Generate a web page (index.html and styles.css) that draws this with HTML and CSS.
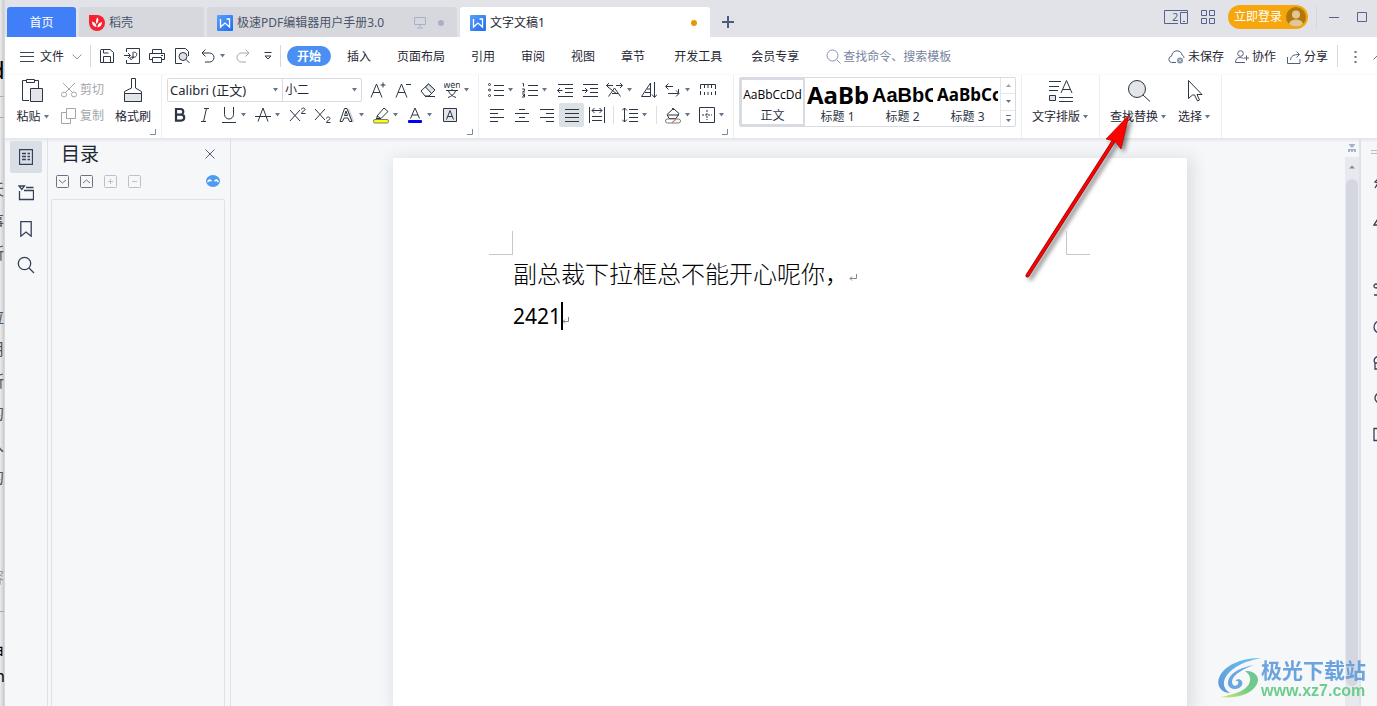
FILE: index.html
```html
<!DOCTYPE html>
<html lang="zh-CN">
<head>
<meta charset="utf-8">
<title>文字文稿1</title>
<link rel="stylesheet" href="styles.css">
</head>
<body>
<svg class="defs" aria-hidden="true">
  <defs>
    <linearGradient id="wg" x1="0" y1="0" x2="1" y2="1"><stop offset="0" stop-color="#5ba0fa"/><stop offset="1" stop-color="#1f6cf0"/></linearGradient>
    <symbol id="caret" viewBox="0 0 7 4"><path d="M1 0h5L3.500 3.500z" fill="#67748e"/></symbol>
    <symbol id="wps" viewBox="0 0 16 16"><rect width="16" height="16" rx="1" fill="url(#wg)"/><path d="M3.500 4v8L8 8l4.500 4V4h-3" fill="none" stroke="#fff" stroke-width="1.300"/></symbol>
    <symbol id="launch" viewBox="0 0 6 6"><path d="M5.500 0v5.500H0" fill="none" stroke="#7d8aa5"/></symbol>
  </defs>
</svg>

<div class="behind" aria-hidden="true">
  <b>d</b><i></i><i></i>
  <span class="first">天</span><span>事</span><span>所</span><span class="blank"></span><span>拉</span><span>用</span><span>所</span><span>的</span><span>入</span><span>的</span>
  <span class="dim">容</span><i class="low"></i><span class="dark">申</span><span class="dark tail">n</span>
</div>

<div class="app">
  <header class="titlebar">
    <nav class="tabs">
      <button class="tab home">首页</button>
      <button class="tab docer"><svg width="16" height="16" viewBox="0 0 16 16"><path d="M0 0h8a8 8 0 1 1-8 8z" fill="#f5222d"/><path d="M7.500 12C4 11.500 3 9 3 6.500 5.500 7 7.500 9 7.500 12zM7.500 9C6.500 6.500 7 4 8.500 2.500 10 4.500 9.500 7 7.500 9zM8.500 12.500c0-3 1.500-5 4.500-5.500 0 3-1.500 5-4.500 5.500z" fill="#fff"/></svg>稻壳</button>
      <button class="tab doc"><svg width="16" height="16"><use href="#wps"/></svg>极速PDF编辑器用户手册3.0<span class="tab-end"><svg width="12" height="12" viewBox="0 0 12 12" fill="none" stroke="#a7b0c8"><path d="M.5.5h11v7H.5zM6 7.500v3M3 11h6"/></svg><i class="dot"></i></span></button>
      <button class="tab doc current"><svg width="16" height="16"><use href="#wps"/></svg>文字文稿1<span class="tab-end"><i class="dot unsaved"></i></span></button>
      <button class="add" aria-label="新建"><svg width="12" height="12" viewBox="0 0 12 12"><path d="M6 0v12M0 6h12" stroke="#4b5b7c" stroke-width="2"/></svg></button>
    </nav>
    <div class="win">
      <button aria-label="窗口"><svg width="24" height="14" viewBox="0 0 24 14" fill="none" stroke="#53638a"><path d="M14 .5H.5v13H14M16.500 2.500h7v11h-7zM14 .5h9.500v2M19 11.500h2"/><text x="8" y="11" font-size="11" stroke="none" fill="#53638a">2</text></svg></button>
      <button class="grid4" aria-label="应用"><svg width="14" height="14" viewBox="0 0 14 14" fill="none" stroke="#53638a"><path d="M.5.5h5v5h-5zM8.500.5h5v5h-5zM.5 8.500h5v5h-5zM8.500 8.500h5v5h-5z"/></svg></button>
      <button class="login">立即登录<svg width="20" height="20" viewBox="0 0 20 20"><circle cx="10" cy="10" r="10" fill="#b1790b"/><circle cx="10" cy="7.500" r="4" fill="#e1c594"/><path d="M3 17c1-6 13-6 14 0a10 10 0 0 1-14 0z" fill="#e1c594"/></svg></button>
      <i class="vline"></i>
      <button class="min" aria-label="最小化"><svg width="10" height="10" viewBox="0 0 10 10"><path d="M0 5.500h10" stroke="#53638a"/></svg></button>
      <button aria-label="最大化"><svg width="10" height="10" viewBox="0 0 10 10"><path d="M.5.500h9v9h-9z" fill="none" stroke="#53638a"/></svg></button>
    </div>
  </header>

  <div class="menubar">
    <button class="file"><svg width="14" height="10" viewBox="0 0 14 10"><path d="M0 .5h14M0 4.500h14M0 9.500h14" stroke="#3d4657"/></svg>文件<svg width="10" height="6" viewBox="0 0 10 6"><path d="M.5.5L5 5 9.500.5" fill="none" stroke="#8d95a5"/></svg></button>
    <i class="vline"></i>
    <div class="quick">
      <button aria-label="保存"><svg width="16" height="16" viewBox="0 0 16 16" class="ln"><path d="M2 1.500h9l3.500 3v10h-13v-12zM4.500 14V8.500h7V14M4.500 1.500V5h5"/></svg></button>
      <button aria-label="输出为PDF"><svg width="16" height="16" viewBox="0 0 16 16" class="ln"><path d="M2.500 4V.5h13v15h-13V12M0 7.500h6M4 5l2.500 2.500L4 10M8.500 4.500c3-1 5 .5 4 3s-4 1.500-4 1.500M9 5v4c0 3-3 3-3 1.500s3-1.500 4-1"/></svg></button>
      <button aria-label="打印"><svg width="16" height="16" viewBox="0 0 16 16" class="ln"><path d="M3.500 5V1.500h9V5M3.500 11.500h-3v-6h15v6h-3M3.500 9.500h9v5h-9zM12 7.500h2"/></svg></button>
      <button aria-label="打印预览"><svg width="16" height="16" viewBox="0 0 16 16" class="ln"><path d="M8 15.500H1.500V.5h10l3 3V8"/><circle cx="9" cy="8.500" r="4" fill="#dfe3e8"/><path d="M12 11.500l3.500 3.500"/></svg></button>
      <button class="dd" aria-label="撤销"><svg width="14" height="14" viewBox="0 0 14 14" class="ln"><path d="M4.500.5L1 4l3.500 3.500M1 4h7.500a4.500 4.500 0 0 1 0 9H4"/></svg><svg width="7" height="4"><use href="#caret"/></svg></button>
      <button class="off" aria-label="恢复"><svg width="14" height="14" viewBox="0 0 14 14" class="ln"><path d="M9.500.5L13 4 9.500 7.500M13 4H5.500a4.500 4.500 0 0 0 0 9H10"/></svg></button>
      <button aria-label="更多"><svg width="8" height="8" viewBox="0 0 8 8" class="ln"><path d="M.5.500h7M1 4h6L4 7z"/></svg></button>
    </div>
    <i class="vline"></i>
    <nav class="menus">
      <button class="on">开始</button><button>插入</button><button>页面布局</button><button>引用</button><button>审阅</button><button>视图</button><button>章节</button><button class="wide">开发工具</button><button class="wide">会员专享</button>
    </nav>
    <label class="search"><svg width="15" height="15" viewBox="0 0 15 15" fill="none" stroke="#8793ab"><circle cx="6.500" cy="6.500" r="5.500"/><path d="M10.500 10.500l4 4"/></svg><input type="text" placeholder="查找命令、搜索模板" aria-label="查找命令"></label>
    <div class="share">
      <button><svg width="17" height="14" viewBox="0 0 17 14" fill="none" stroke="#53607c"><path d="M8 12.500H3.500a3.200 3.200 0 0 1 0-6.300C4 2.500 6.500.8 9 .8c3 0 4.500 2 5 4.200 1.300.5 2 1.500 2 3"/><circle cx="12" cy="10.500" r="3" fill="#8390aa" stroke="none"/><path d="M10.800 9.300l2.400 2.400m0-2.400l-2.400 2.400" stroke="#fff" stroke-width=".8"/></svg>未保存</button>
      <button><svg width="14" height="14" viewBox="0 0 14 14" fill="none" stroke="#53607c"><circle cx="5.500" cy="3.500" r="2.800"/><path d="M10 12.500H.5c0-6 6-5.500 8-4M11.500 5.500v5M9 8h5"/></svg>协作</button>
      <button><svg width="14" height="13" viewBox="0 0 14 13" fill="none" stroke="#53607c"><path d="M.5 6v6.500h12.500V8M3.500 9c.5-4 3-5.500 8.500-5.500M9.500.5l3 3-3 3"/></svg>分享</button>
      <i class="vline"></i>
      <button class="dots" aria-label="更多"><svg width="3" height="12" viewBox="0 0 3 12"><path d="M.5 0h2v2h-2zM.5 5h2v2h-2zM.5 10h2v2h-2z" fill="#6b7387"/></svg></button>
      <button class="fold" aria-label="折叠"><svg width="10" height="6" viewBox="0 0 10 6"><path d="M.5 5.500L5 1l4.500 4.500" fill="none" stroke="#6b7387"/></svg></button>
    </div>
  </div>

  <div class="ribbon">
    <section class="group clip">
      <button class="big"><span class="pic"><svg width="22" height="24" viewBox="0 0 22 24" class="ln"><path d="M7 21.500H.5v-20h4M12.500 1.500h4V9M4.500.5h8v3h-8z"/><path d="M8.500 9.500h12v13h-12z" fill="#e3e5e8"/></svg></span><span class="cap">粘贴<svg width="7" height="4"><use href="#caret"/></svg></span></button>
      <div class="pair off">
        <button><svg width="16" height="16" viewBox="0 0 16 16" class="ln"><circle cx="3" cy="12.500" r="2.500"/><circle cx="13" cy="12.500" r="2.500"/><path d="M2 1l9.500 9.500M14 1l-9.500 9.500"/></svg>剪切</button>
        <button><svg width="16" height="16" viewBox="0 0 16 16" class="ln"><path d="M5.500.5h9v10h-9zM5 4.500H.5v11h9V11"/></svg>复制</button>
      </div>
      <button class="big"><span class="pic"><svg width="20" height="26" viewBox="0 0 20 26" class="ln"><path d="M8.500.5h4V10l6 3.500v10h-17v-10l7-3.500z"/><path d="M1.500 15.500h17v8h-17z" fill="#e3e5e8"/></svg></span><span class="cap">格式刷</span></button>
      <svg class="launch" width="6" height="6"><use href="#launch"/></svg>
    </section>

    <section class="group">
      <div class="row">
        <div class="combos">
          <label class="combo font"><select aria-label="字体"><option>Calibri (正文)</option></select><svg width="7" height="4"><use href="#caret"/></svg></label>
          <label class="combo size"><select aria-label="字号"><option>小二</option></select><svg width="7" height="4"><use href="#caret"/></svg></label>
        </div>
        <button class="ib" aria-label="增大字号"><svg width="16" height="16" viewBox="0 0 16 16" class="ln"><path d="M1 15.500L6.500 2 12 15.500M3 10.500h7M10.500 3h5M13 .5v5"/></svg></button>
        <button class="ib" aria-label="减小字号"><svg width="16" height="16" viewBox="0 0 16 16" class="ln"><path d="M1 15.500L6.500 2 12 15.500M3 10.500h7M11 2.500h5"/></svg></button>
        <button class="ib" aria-label="清除格式"><svg width="16" height="16" viewBox="0 0 16 16" class="ln"><path d="M1 9l7.500-7 6.500 6-6 6H5z"/><path d="M5.500 5l6 6.500 3.500-3.500L8.500 2z" fill="#dfe2e6"/><path d="M5 14.500h10"/></svg></button>
        <button class="ib dd" aria-label="拼音"><svg width="16" height="16" viewBox="0 0 16 16" class="ln"><text x="8" y="6" font-size="9" text-anchor="middle" class="py">wén</text><path d="M2 8.500h12M8 7v2M4.500 9c1 3 4 5.500 7.500 6.500M11.500 9c-1 3-4 5.500-7.500 6.500"/></svg><svg width="7" height="4"><use href="#caret"/></svg></button>
      </div>
      <div class="row">
        <button class="ib" aria-label="加粗"><svg width="16" height="16" viewBox="0 0 16 16" class="ln"><path d="M4 2h4.500a2.800 2.800 0 0 1 0 5.600H4zM4 7.600h5.200a3 3 0 0 1 0 6H4z" stroke-width="2.200"/></svg></button>
        <button class="ib" aria-label="倾斜"><svg width="16" height="16" viewBox="0 0 16 16" class="ln"><path d="M7 1.500h5M4 14.500h5M9.500 1.500l-3 13"/></svg></button>
        <button class="ib dd" aria-label="下划线"><svg width="16" height="16" viewBox="0 0 16 16" class="ln"><path d="M3.500 0v7.500a4.500 4.500 0 0 0 9 0V0M1 15.500h14"/></svg><svg width="7" height="4"><use href="#caret"/></svg></button>
        <button class="ib dd" aria-label="删除线"><svg width="16" height="16" viewBox="0 0 16 16" class="ln"><path d="M3 14.500L8 1l5 13.500M0 9.500h16"/></svg><svg width="7" height="4"><use href="#caret"/></svg></button>
        <button class="ib" aria-label="上标"><svg width="17" height="16" viewBox="0 0 17 16" class="ln"><path d="M1 3l10 11M11 3L1 14M12.500 2.500c0-2 3.500-2 3.500 0 0 1.500-3.500 2-3.500 4H16.500"/></svg></button>
        <button class="ib" aria-label="下标"><svg width="17" height="16" viewBox="0 0 17 16" class="ln"><path d="M1 2l10 11M11 2L1 13M12.500 11.500c0-2 3.500-2 3.500 0 0 1.500-3.500 2-3.500 4H16.500"/></svg></button>
        <button class="ib dd" aria-label="文字效果"><svg width="16" height="16" viewBox="0 0 16 16" class="ln"><path d="M9 2l5 13" stroke="#d6d9de" stroke-width="3"/><path d="M1 14.500L5.500 1.500h2.500l5 13h-2.500L9 11H5l-1.500 3.500zM5.500 8.500h3L7 4z"/></svg><svg width="7" height="4"><use href="#caret"/></svg></button>
        <button class="ib dd" aria-label="突出显示"><svg width="16" height="17" viewBox="0 0 16 17" class="ln"><path d="M4 9L11 1l4 3.500-7 7H4zM4 9l4 2.500M3 11.500h5"/><rect x=".5" y="12.500" width="15" height="3.500" rx="1.500" fill="#ff0" stroke="#77787a"/></svg><svg width="7" height="4"><use href="#caret"/></svg></button>
        <button class="ib dd" aria-label="字体颜色"><svg width="16" height="17" viewBox="0 0 16 17" class="ln"><path d="M3.500 11.500L8 1l4.500 10.500M5 8h6"/><rect x="1" y="13" width="14" height="3" rx="1" fill="#00f" stroke="none"/></svg><svg width="7" height="4"><use href="#caret"/></svg></button>
        <button class="ib" aria-label="字符底纹"><svg width="14" height="14" viewBox="0 0 14 14" class="ln"><path d="M.5.500h13v13H.5z" fill="#e3e5e8"/><path d="M3.500 11.500L7 2.500l3.500 9M4.500 8.500h5"/></svg></button>
      </div>
      <svg class="launch" width="6" height="6"><use href="#launch"/></svg>
    </section>

    <section class="group">
      <div class="row">
        <button class="ib dd" aria-label="项目符号"><svg width="16" height="16" viewBox="0 0 16 16" class="ln"><path d="M6 3.500h10M6 8.500h10M6 13.500h10"/><circle cx="1.500" cy="2.500" r="1"/><circle cx="1.500" cy="8" r="1"/><circle cx="1.500" cy="13.500" r="1"/></svg><svg width="7" height="4"><use href="#caret"/></svg></button>
        <button class="ib dd" aria-label="编号"><svg width="16" height="16" viewBox="0 0 16 16" class="ln"><path d="M6 3.500h10M6 8.500h10M6 13.500h10M.5 1.500h1v3M0 7h2.500v1.500L.5 10H3M0 12h2.500v3H0M1 13.500h1"/></svg><svg width="7" height="4"><use href="#caret"/></svg></button>
        <button class="ib" aria-label="减少缩进"><svg width="16" height="16" viewBox="0 0 16 16" class="ln"><path d="M1 2.500h15M8 6.500h8M8 10.500h8M1 14.500h15M.5 8.500h5M3 6L.5 8.500 3 11"/></svg></button>
        <button class="ib" aria-label="增加缩进"><svg width="16" height="16" viewBox="0 0 16 16" class="ln"><path d="M1 2.500h15M8 6.500h8M8 10.500h8M1 14.500h15M0 8.500h5M3 6l2.500 2.500L3 11"/></svg></button>
        <button class="ib dd" aria-label="中文版式"><svg width="17" height="16" viewBox="0 0 17 16" class="ln"><path d="M2.500 14.500L8.500 6l6 8.500M2 5l9 7M6 11.500h6M16 3.500H10M7 3.500H.5M3 1L.5 3.500 3 6M14 1l2.500 2.500L14 6"/></svg><svg width="7" height="4"><use href="#caret"/></svg></button>
        <button class="ib" aria-label="排序"><svg width="16" height="16" viewBox="0 0 16 16" class="ln"><path d="M.5 14.500L9.500 1v13.500h-9M6 7h3.500M4 10.500h5.500M13.500 0v15M11 12.500l2.500 3 2.500-3"/></svg></button>
        <button class="ib dd" aria-label="换行"><svg width="16" height="16" viewBox="0 0 16 16" class="ln"><path d="M8 4.500H1M3.500 1.500L.5 4.500l3 3M3 11.500h10.500V7M11 8.500l3 3-3 3"/></svg><svg width="7" height="4"><use href="#caret"/></svg></button>
        <button class="ib" aria-label="标尺"><svg width="16" height="14" viewBox="0 0 16 14" class="ln"><path d="M.5 6V1.500h15V6M4.500 2v3M8 2v3M11.500 2v3M.5 8v4M4.500 9v3M8 9v3M11.500 9v3M15.500 8v4"/></svg></button>
      </div>
      <div class="row">
        <button class="ib" aria-label="左对齐"><svg width="14" height="14" viewBox="0 0 14 14" class="ln"><path d="M0 1.500h14M0 5.500h8M0 9.500h14M0 13.500h8"/></svg></button>
        <button class="ib" aria-label="居中"><svg width="14" height="14" viewBox="0 0 14 14" class="ln"><path d="M4 1.500h6M0 5.500h14M4 9.500h6M0 13.500h14"/></svg></button>
        <button class="ib" aria-label="右对齐"><svg width="14" height="14" viewBox="0 0 14 14" class="ln"><path d="M0 1.500h14M6 5.500h8M0 9.500h14M6 13.500h8"/></svg></button>
        <button class="ib sel" aria-label="两端对齐"><svg width="14" height="14" viewBox="0 0 14 14" class="ln"><path d="M0 1.500h14M0 5.500h14M0 9.500h14M0 13.500h14"/></svg></button>
        <button class="ib" aria-label="分散对齐"><svg width="16" height="16" viewBox="0 0 16 16" class="ln"><path d="M.5 0v16M15.500 0v16M3 3.500h10M5.500 1L3 3.500 5.500 6M10.500 1L13 3.500 10.500 6M3 9.500h10M3 13.500h10"/></svg></button>
        <i class="sep"></i>
        <button class="ib dd" aria-label="行距"><svg width="16" height="16" viewBox="0 0 16 16" class="ln"><path d="M2.500 1v14M0 3.500L2.500 1 5 3.500M0 12.500L2.500 15 5 12.500M7 2.500h9M7 6.500h9M7 10.500h9M7 14.500h9"/></svg><svg width="7" height="4"><use href="#caret"/></svg></button>
        <i class="sep"></i>
        <button class="ib dd" aria-label="底纹"><svg width="16" height="17" viewBox="0 0 16 17" class="ln"><path d="M2 7.500l6.500-6 5.500 5-3 5H4z" fill="#fff"/><path d="M7 1l2 2M3 8h11"/><rect x=".5" y="12" width="15" height="4" rx="2" fill="#fff" stroke="#77787a"/><path d="M7 15.500l4-3" stroke="#e34a4a"/></svg><svg width="7" height="4"><use href="#caret"/></svg></button>
        <button class="ib dd" aria-label="边框"><svg width="16" height="16" viewBox="0 0 16 16" class="ln"><path d="M.5.500h15v15H.5z"/><path d="M3 8h10M8 3v10" stroke-dasharray="2 1"/></svg><svg width="7" height="4"><use href="#caret"/></svg></button>
      </div>
      <svg class="launch" width="6" height="6"><use href="#launch"/></svg>
    </section>

    <section class="group gal">
      <div class="gallery">
        <button class="style picked"><span class="s0">AaBbCcDd</span>正文</button>
        <button class="style"><span class="s1">AaBb</span>标题 1</button>
        <button class="style"><span class="s2">AaBbC</span>标题 2</button>
        <button class="style"><span class="s3">AaBbCc</span>标题 3</button>
        <div class="scroller">
          <button aria-label="上"><svg width="5" height="3" viewBox="0 0 5 3"><path d="M0 3h5L2.500 0z" fill="#9aa3b5"/></svg></button>
          <button aria-label="下"><svg width="5" height="3" viewBox="0 0 5 3"><path d="M0 0h5L2.500 3z" fill="#67748e"/></svg></button>
          <button aria-label="展开"><svg width="5" height="7" viewBox="0 0 5 7"><path d="M0 0h5v1H0zM0 4h5L2.500 7z" fill="#67748e"/></svg></button>
        </div>
      </div>
    </section>

    <section class="group tools">
      <button class="big"><span class="pic"><svg width="24" height="22" viewBox="0 0 24 22" class="ln"><path d="M0 1.500h12M0 6.500h10M0 10.500h9M10 17.500h14M10 21.500h14M12 13L17.500.5 23 13M14 9.500h7"/><path d="M.5 15.500h6v5h-6z" fill="#e3e5e8"/></svg></span><span class="cap">文字排版<svg width="7" height="4"><use href="#caret"/></svg></span></button>
    </section>
    <section class="group tools">
      <button class="big"><span class="pic"><svg width="24" height="24" viewBox="0 0 24 24" class="ln"><circle cx="10" cy="10" r="8.500" fill="#e3e5e8"/><path d="M16 16l7 6.500"/></svg></span><span class="cap">查找替换<svg width="7" height="4"><use href="#caret"/></svg></span></button>
      <button class="big"><span class="pic"><svg width="16" height="24" viewBox="0 0 16 24" class="ln"><path d="M1.500 1.500v18L5.500 16h2l3 6 2-1-2.500-5.500h5z"/></svg></span><span class="cap">选择<svg width="7" height="4"><use href="#caret"/></svg></span></button>
    </section>
  </div>

  <main class="work">
    <nav class="rail">
      <button class="on" aria-label="目录"><svg width="14" height="16" viewBox="0 0 14 16" class="nv"><path d="M.5.500h13v15H.5zM3 4.500h4M8.500 4.500H11M3 7.500h4M8.500 7.500H11M3 10.500h4M8.500 10.500H11"/></svg></button>
      <button aria-label="导航"><svg width="16" height="16" viewBox="0 0 16 16" class="nv"><path d="M1 1h5.500L3.800 4.500zM8 2.500h7.500M1.500 6v8.500h14v-9H6"/></svg></button>
      <button aria-label="书签"><svg width="12" height="16" viewBox="0 0 12 16" class="nv"><path d="M.8.500h10.400v14.700L6 11 .8 15.200z"/></svg></button>
      <button aria-label="查找"><svg width="18" height="18" viewBox="0 0 18 18" class="nv"><circle cx="7.500" cy="7.500" r="6.200"/><path d="M12 12l5 5"/></svg></button>
    </nav>
    <aside class="panel">
      <div class="head"><h2>目录</h2><button aria-label="关闭"><svg width="10" height="10" viewBox="0 0 10 10"><path d="M.5.500l9 9M9.500.5l-9 9" stroke="#53607c"/></svg></button></div>
      <div class="acts">
        <button aria-label="展开"><svg width="13" height="13" viewBox="0 0 13 13" class="ac"><rect x=".5" y=".5" width="12" height="12" rx="1"/><path d="M3 5l3.500 3L10 5"/></svg></button>
        <button aria-label="收起"><svg width="13" height="13" viewBox="0 0 13 13" class="ac"><rect x=".5" y=".5" width="12" height="12" rx="1"/><path d="M3 8l3.500-3L10 8"/></svg></button>
        <button class="pale" aria-label="增加"><svg width="13" height="13" viewBox="0 0 13 13" class="ac"><rect x=".5" y=".5" width="12" height="12" rx="1"/><path d="M4 6.500h5M6.500 4v5"/></svg></button>
        <button class="pale" aria-label="减少"><svg width="13" height="13" viewBox="0 0 13 13" class="ac"><rect x=".5" y=".5" width="12" height="12" rx="1"/><path d="M4 6.500h5"/></svg></button>
        <button class="smart" aria-label="智能识别"><svg width="14" height="12" viewBox="0 0 14 12"><ellipse cx="7" cy="6" rx="7" ry="6" fill="#4f9bf0"/><path d="M1.500 7l2-2 2 1M8.500 6l2-1 2 2" fill="none" stroke="#fff" stroke-width="1.500"/></svg></button>
      </div>
      <div class="outline"></div>
    </aside>
    <div class="canvas">
      <article class="page">
        <div class="body">
          <i class="mark l"></i><i class="mark r"></i>
          <p>副总裁下拉框总不能开心呢你，<svg width="8" height="8" viewBox="0 0 8 8" class="ret"><path d="M7.500 0v4.500H1M3 2.500l-2 2 2 2"/></svg></p>
          <p class="num">2421<i class="cursor"></i><svg width="8" height="8" viewBox="0 0 8 8" class="ret"><path d="M5.500 0v4.500H0M2 2.500l-2 2 2 2"/></svg></p>
        </div>
      </article>
    </div>
    <div class="vscroll">
      <div class="split"><svg width="8" height="8" viewBox="0 0 8 8" fill="#a9b2c6"><path d="M1 0h6v1L4 4 1 1zM0 5h8v3H6V6.500H5V8H3V6.500H2V8H0z"/></svg></div>
      <div class="track"><svg width="6" height="4" viewBox="0 0 6 4"><path d="M0 3.500h6L3 .5z" fill="#7d8aa5"/></svg><div class="thumb"></div></div>
    </div>
    <aside class="edge">
      <svg width="12" height="6" viewBox="0 0 12 6" class="handle"><path d="M0 1.500h12M0 4.500h12"/></svg>
      <svg width="16" height="16" viewBox="0 0 16 16" class="nv"><path d="M6 3L2 7l3 1-3 5"/></svg>
      <svg width="16" height="16" viewBox="0 0 16 16" class="nv"><path d="M1 14h8l3-8H6z"/></svg>
      <svg width="16" height="16" viewBox="0 0 16 16" class="nv gap"><circle cx="3" cy="3" r="2"/><path d="M1 12h14M4 3h12"/></svg>
      <svg width="16" height="16" viewBox="0 0 16 16" class="nv"><circle cx="7" cy="8" r="6"/></svg>
      <svg width="16" height="16" viewBox="0 0 16 16" class="nv"><path d="M2 8C-1 3 6-1 9 3M2 8v6h12M2 8h10"/></svg>
      <svg width="16" height="16" viewBox="0 0 16 16" class="nv"><circle cx="7" cy="7" r="5"/></svg>
      <svg width="16" height="16" viewBox="0 0 16 16" class="nv"><path d="M1 1.500h13v12H1z"/></svg>
    </aside>
  </main>
</div>

<svg class="arrow" width="116" height="170" viewBox="0 0 116 170" aria-hidden="true"><path d="M5.500 165.500L93 29" stroke="#8a0d0d" stroke-width="4" stroke-linecap="round"/><path d="M5.500 165.500L93 29" stroke="#f00" stroke-width="2.600" stroke-linecap="round"/><path d="M107 5L99 39l-6-8-9-2z" fill="#f00" stroke="#a00" stroke-width=".7"/></svg>

<div class="brand">
  <svg width="44" height="42" viewBox="0 0 44 42" aria-hidden="true">
    <defs><linearGradient id="sw" x1="0" y1="1" x2="1" y2="0"><stop offset="0" stop-color="#4b8ddb"/><stop offset="1" stop-color="#5cc1ea"/></linearGradient><linearGradient id="sg" x1="0" y1="1" x2="1" y2="0"><stop offset="0" stop-color="#d5e36a"/><stop offset=".5" stop-color="#67c877"/><stop offset="1" stop-color="#5bc08f"/></linearGradient></defs>
    <path d="M44 1C28 1 8 6 2 21c-3 8 3 15 11 15-7-4-8-11-3-18C17 9 29 4 44 1z" fill="url(#sw)"/>
    <path d="M37 8C24 10 10 17 11 27c1 6 11 7 14 1 2-5-4-8-7-4 3-1 4 1 3 3-2 3-6 2-6-2C15 18 26 12 37 8z" fill="#5c9fe0"/>
    <path d="M28 14c8-1 16 5 12 13C35 37 20 42 3 40c13-2 25-6 29-13 3-6 0-10-4-13z" fill="url(#sg)"/>
  </svg>
  <div><strong>极光下载站</strong><span>www.xz7.com</span></div>
</div>
</body>
</html>
```

FILE: styles.css
```css
* { box-sizing: border-box; }
html, body { height: 100%; }
body {
  margin: 0;
  display: flex;
  position: relative;
  overflow: hidden;
  background: #f5f7f9;
  color: #1f2733;
  font: 12px/16px "Noto Sans", "Noto Sans CJK SC", sans-serif;
}
button, input, select {
  font: inherit;
  color: inherit;
  background: none;
  border: 0;
  padding: 0;
  margin: 0;
  white-space: nowrap;
}
button { display: inline-flex; align-items: center; justify-content: center; flex: none; }
svg { flex: none; display: block; }
.defs { position: absolute; width: 0; height: 0; }
.ln { fill: none; stroke: #2d3644; }
.nv { fill: none; stroke: #34405a; stroke-width: 1.3; }
.ac { fill: none; stroke: #6d7380; }
.vline { width: 1px; height: 22px; background: #d4d7dd; flex: none; }

/* sliver of the window underneath */
.behind {
  width: 4px;
  flex: none;
  overflow: hidden;
  display: flex;
  flex-direction: column;
  background: linear-gradient(90deg, #ececec, #c9cacd);
  font-size: 16px;
  color: #555;
}
.behind b { font: 24px/32px "Noto Sans", sans-serif; margin: 54px 0 10px -10px; color: #000; height: 32px; }
.behind i { height: 1px; background: #aaa; margin-bottom: 20px; }
.behind span { height: 32px; line-height: 32px; margin-left: -12px; width: 16px; }
.behind .first { margin-top: 35px; }
.behind .dim { color: #999; margin-top: 68px; }
.behind .low { margin: 18px 0 24px; }
.behind .dark { color: #000; height: 24px; }
.behind .tail { margin-left: -5px; }

.app { flex: 1; min-width: 0; display: flex; flex-direction: column; border-left: 1px solid #d5d7dc; }

/* title bar */
.titlebar { display: flex; justify-content: space-between; height: 37px; flex: none; background: #e1e3e8; padding: 0 10px 0 2px; }
.tabs { display: flex; align-items: flex-end; gap: 3px; }
.tab { height: 30px; border-radius: 3px 3px 0 0; background: #d6d8dd; color: #4b5468; padding: 2px 10px 0; gap: 4px; justify-content: flex-start; }
.home { width: 69px; background: #417ff9; color: #fff; justify-content: center; }
.docer { width: 125px; }
.doc { width: 250px; }
.current { background: #fff; color: #1f2733; }
.tab-end { margin-left: auto; display: flex; align-items: center; gap: 12px; padding-right: 3px; }
.dot { width: 6px; height: 6px; border-radius: 3px; background: #a7b0c8; }
.dot.unsaved { background: #e99700; }
.add { width: 30px; height: 30px; }
.win { display: flex; align-items: center; height: 33px; }
.grid4 { margin: 0 13px; }
.login { height: 24px; border-radius: 12px; background: #f5a70d; color: #fff; padding: 0 2px 0 6px; gap: 4px; }
.win .vline { margin: 0 12px 0 8px; }
.min { margin-right: 18px; }

/* menu bar */
.menubar { display: flex; align-items: center; height: 38px; flex: none; background: #fff; padding-left: 15px; }
.file { gap: 6px; margin-right: 8px; padding-top: 1px; }
.file svg:last-child { margin-left: 2px; }
.quick { display: flex; padding-left: 3px; }
.quick button { width: 25px; height: 24px; }
.quick .dd { width: 36px; gap: 4px; padding-left: 2px; }
.off { color: #a3a6ab; }
.off .ln { stroke: #a3a6ab; }
.menus { display: flex; gap: 6px; margin-left: 6px; }
.menus button { height: 20px; padding: 2px 10px 0; border-radius: 10px; }
.menus .on { background: #4a90f2; color: #fff; font-weight: 700; }
.menus .wide { margin-left: 3px; }
.search { display: flex; align-items: center; gap: 2px; margin-left: 17px; }
.search input { width: 130px; outline: 0; padding-top: 1px; }
.search input::placeholder { color: #7785a0; opacity: 1; }
.share { margin-left: auto; display: flex; align-items: center; gap: 11px; flex: none; overflow: hidden; }
.share button { gap: 3px; padding-top: 2px; }
.share .vline { margin-left: -2px; }
.share .dots { margin-left: 5px; }
.share .fold { width: 4px; margin-left: 5px; justify-content: flex-start; overflow: hidden; }

/* ribbon */
.ribbon { display: flex; height: 64px; flex: none; background: #fff; border-bottom: 1px solid #e4e6ea; box-shadow: 0 1px 3px #dfe2e6; z-index: 1; }
.group { position: relative; flex: none; padding: 3px 4px 0 5px; border-right: 1px solid #eceef0; display: flex; flex-direction: column; gap: 1px; }
.launch { position: absolute; right: 5px; bottom: 3px; }
.row { display: flex; height: 24px; align-items: center; }
.ib { width: 25px; height: 24px; }
.ib.dd { width: 34px; justify-content: flex-start; padding-left: 4px; gap: 3px; }
.ib.sel { background: #dce1e6; border-radius: 2px; }
.sep { width: 1px; height: 18px; background: #dcdfe4; margin: 0 4px; }
.py { stroke: none; fill: #2d3644; }
.clip { flex-direction: row; padding-left: 7px; padding-right: 8px; gap: 7px; }
.big { flex-direction: column; align-self: flex-start; min-width: 40px; }
.clip .big:first-child { min-width: 42px; }
.pic { height: 26px; display: flex; align-items: center; }
.cap { height: 26px; display: flex; align-items: center; gap: 2px; }
.pair { display: flex; flex-direction: column; gap: 2px; padding-right: 2px; }
.pair button { height: 24px; gap: 3px; }
.combos { display: flex; border: 1px solid #d8dbe0; border-radius: 2px; height: 24px; margin-right: 3px; }
.combo { position: relative; display: flex; align-items: center; }
.combo select { appearance: none; width: 100%; height: 22px; padding-left: 2px; outline: 0; }
.combo svg { position: absolute; right: 3px; pointer-events: none; }
.combo.font { width: 115px; border-right: 1px solid #d8dbe0; }
.combo.font select { font-size: 13px; }
.combo.size { width: 78px; }
.gallery { display: flex; height: 50px; border: 1px solid #d8dbe0; border-radius: 2px; }
.group.gal { padding-top: 2px; padding-right: 5px; }
.style { width: 65px; flex-direction: column; justify-content: flex-end; overflow: hidden; color: #2d3644; }
.style span { height: 30px; width: 61px; overflow: hidden; text-align: left; color: #000; }
.style:not(.picked) { padding-bottom: 1px; }
.picked { border: 2px solid #d8dbe2; }
.style .s0 { font: 12px/30px "Open Sans", sans-serif; text-align: center; }
.style .s1 { font: 700 24px/32px "Noto Sans", sans-serif; }
.style .s2 { font: 700 20px/32px "Liberation Sans", sans-serif; }
.style .s3 { font: 700 17px/32px "Noto Sans", sans-serif; }
.scroller { width: 15px; display: flex; flex-direction: column; border-left: 1px solid #e4e6ea; }
.scroller button { flex: 1; }
.scroller button + button { border-top: 1px solid #e4e6ea; }
.tools { flex-direction: row; padding: 3px 10px 0; gap: 11px; }
.tools .big { min-width: 0; }

/* workspace */
.work { flex: 1; min-height: 0; display: flex; }
.rail { width: 43px; flex: none; padding: 2px 5px; display: flex; flex-direction: column; gap: 4px; border-right: 1px solid #dfe1e6; }
.rail button { height: 32px; width: 32px; border-radius: 2px; }
.rail .on { background: #dadee5; }
.panel { width: 183px; flex: none; display: flex; flex-direction: column; padding: 0 5px 0 3px; border-right: 1px solid #dfe1e6; }
.head { display: flex; align-items: center; justify-content: space-between; height: 30px; padding: 0 10px; }
.head h2 { margin: 0; font-size: 19px; line-height: 28px; font-weight: 400; }
.acts { display: flex; align-items: center; gap: 11px; height: 24px; padding: 0 5px; margin-bottom: 6px; }
.pale .ac { stroke: #bdc0c6; }
.smart { margin-left: auto; }
.outline { flex: 1; border: 1px solid #e0e2e7; border-bottom: 0; border-radius: 2px 2px 0 0; }
.canvas { flex: 1; min-width: 0; display: flex; justify-content: center; padding: 19px 0 0 4px; overflow: hidden; }
.page { width: 794px; flex: none; background: #fff; padding: 94px 121px 0 120px; box-shadow: 3px 3px 14px 3px #dcdfe2; }
.body { position: relative; color: #000; }
.body p { margin: 0; font: 24px/42px "Noto Sans CJK SC", sans-serif; font-weight: 300; display: flex; align-items: center; }
.body .num { font: 21px/44px "Noto Sans", sans-serif; }
.ret { fill: none; stroke: #888; margin-top: 10px; }
.cursor { width: 2px; height: 28px; background: #000; }
.mark { position: absolute; top: -21px; width: 24px; height: 24px; border-bottom: 1px solid #c8c8c8; }
.mark.l { right: 100%; border-right: 1px solid #c8c8c8; }
.mark.r { left: 100%; border-left: 1px solid #c8c8c8; }
.vscroll { width: 14px; flex: none; display: flex; flex-direction: column; }
.split { height: 18px; display: flex; align-items: center; justify-content: center; }
.track { flex: 1; background: #e7e9ee; display: flex; flex-direction: column; align-items: center; padding: 8px 0 20px; gap: 10px; }
.thumb { flex: 1; width: 12px; border-radius: 6px; background: #d4d7df; }
.edge { width: 18px; flex: none; overflow: hidden; border-left: 2px solid #e0e2e9; padding: 10px 0 0 12px; display: flex; flex-direction: column; gap: 20px; }
.handle { stroke: #b9bdc6; margin: 0 0 0 -2px; }
.edge .gap { margin-top: 36px; }

/* annotation and site brand */
.arrow { position: absolute; left: 1022px; top: 110px; z-index: 3; filter: drop-shadow(3px 3px 2px #0007); }
.brand { position: absolute; right: 11px; bottom: 6px; z-index: 3; display: flex; align-items: center; opacity: .9; }
.brand div { display: flex; flex-direction: column; }
.brand strong { font: 700 21px/26px "Noto Sans CJK SC", sans-serif; color: #5c9bdb; }
.brand span { font: 700 16px/18px "Liberation Sans", sans-serif; color: #5fc983; }
```
